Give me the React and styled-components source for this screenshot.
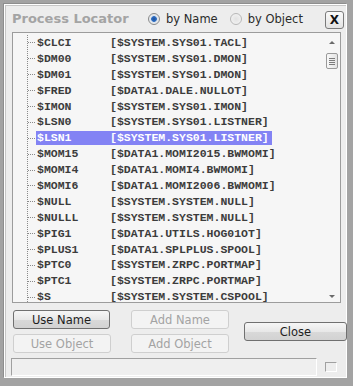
import React from "react";
import styled, { createGlobalStyle } from "styled-components";

const GlobalStyle = createGlobalStyle`
  html, body {
    margin: 0;
    padding: 0;
    background: #a3a3a3;
  }
  * {
    box-sizing: border-box;
  }
`;

const processes = [
  ["$CLCI", "[$SYSTEM.SYS01.TACL]"],
  ["$DM00", "[$SYSTEM.SYS01.DMON]"],
  ["$DM01", "[$SYSTEM.SYS01.DMON]"],
  ["$FRED", "[$DATA1.DALE.NULLOT]"],
  ["$IMON", "[$SYSTEM.SYS01.IMON]"],
  ["$LSN0", "[$SYSTEM.SYS01.LISTNER]"],
  ["$LSN1", "[$SYSTEM.SYS01.LISTNER]"],
  ["$MOM15", "[$DATA1.MOMI2015.BWMOMI]"],
  ["$MOMI4", "[$DATA1.MOMI4.BWMOMI]"],
  ["$MOMI6", "[$DATA1.MOMI2006.BWMOMI]"],
  ["$NULL", "[$SYSTEM.SYSTEM.NULL]"],
  ["$NULLL", "[$SYSTEM.SYSTEM.NULL]"],
  ["$PIG1", "[$DATA1.UTILS.HOG01OT]"],
  ["$PLUS1", "[$DATA1.SPLPLUS.SPOOL]"],
  ["$PTC0", "[$SYSTEM.ZRPC.PORTMAP]"],
  ["$PTC1", "[$SYSTEM.ZRPC.PORTMAP]"],
  ["$S", "[$SYSTEM.SYSTEM.CSPOOL]"],
];

const App = () => {
  return (
    <Frame>
      <GlobalStyle />
      <Panel>
        <Header>
          <Title>Process Locator</Title>
          <RadioGroup>
            <RadioOption>
              <Radio checked />
              by Name
            </RadioOption>
            <RadioOption>
              <Radio />
              by Object
            </RadioOption>
          </RadioGroup>
          <CloseX>X</CloseX>
        </Header>

        <ListBox>
          <Tree>
            {processes.map(([name, path]) => (
              <Row key={name}>
                <Connector />
                <Label selected={name === "$LSN1"}>
                  <Name>{name}</Name>
                  {path}
                </Label>
              </Row>
            ))}
          </Tree>
          <ScrollBar>
            <Arrow />
            <Thumb>
              <Grip />
              <Grip />
              <Grip />
              <Grip />
            </Thumb>
            <ArrowSpacer />
            <Arrow down />
          </ScrollBar>
        </ListBox>

        <Buttons>
          <Button>Use Name</Button>
          <Button disabled>Add Name</Button>
          <CloseButton>Close</CloseButton>
          <Button disabled>Use Object</Button>
          <Button disabled>Add Object</Button>
        </Buttons>

        <StatusRow>
          <StatusField />
          <StatusBox />
        </StatusRow>
      </Panel>
    </Frame>
  );
};

const Frame = styled.div`
  width: 353px;
  height: 386px;
  background: #a3a3a3;
  padding: 4px 6px 8px 4px;
`;

const Panel = styled.div`
  width: 100%;
  height: 100%;
  background: #ededed;
  border: 1px solid #ffffff;
  box-shadow: inset 1px 1px 0 #c6c6c6, -1px -1px 0 #8e8e8e;
  display: flex;
  flex-direction: column;
  font-family: "DejaVu Sans", Verdana, sans-serif;
`;

const Header = styled.div`
  height: 27px;
  display: flex;
  align-items: center;
  padding: 0 2px 0 7px;
`;

const Title = styled.div`
  font-size: 13px;
  font-weight: bold;
  color: #a4a4a4;
  width: 136px;
`;

const RadioGroup = styled.div`
  display: flex;
  gap: 12px;
  flex: 1;
`;

const RadioOption = styled.label`
  display: flex;
  align-items: center;
  gap: 6px;
  font-size: 11.5px;
  color: #2b2b2b;
`;

const Radio = styled.span`
  width: 12px;
  height: 12px;
  border-radius: 50%;
  border: 1px solid ${(p) => (p.checked ? "#8a8a8a" : "#b8b8b8")};
  background: ${(p) =>
    p.checked
      ? "radial-gradient(circle, #1d4f9a 0, #2f6fc4 2.5px, #dde3ea 3.2px, #f4f4f4 100%)"
      : "radial-gradient(circle, #e2e2e2 0, #f6f6f6 100%)"};
`;

const CloseX = styled.div`
  width: 19px;
  height: 18px;
  margin-top: 2px;
  border: 1px solid #7a7a7a;
  border-radius: 3px;
  background: linear-gradient(#fafafa, #e2e2e2);
  display: flex;
  align-items: center;
  justify-content: center;
  font-size: 12px;
  font-weight: bold;
  color: #111;
`;

const ListBox = styled.div`
  margin-left: 7px;
  width: 329px;
  height: 271px;
  border: 1px solid #9c9c9c;
  background: #f6f6f6;
  display: flex;
  overflow: hidden;
`;

const Tree = styled.div`
  flex: 1;
  margin: 2px 0 0 14px;
  border-left: 1px dotted #8a8a8a;
  font-family: "Liberation Mono", "Courier New", monospace;
  font-size: 11.5px;
  font-weight: bold;
  color: #3c3c3c;
`;

const Row = styled.div`
  height: 15.9px;
  display: flex;
  align-items: center;
`;

const Connector = styled.span`
  width: 7px;
  border-top: 1px dotted #8a8a8a;
  margin-right: 1px;
`;

const Label = styled.span`
  line-height: 14px;
  padding: 0 3px 0 1px;
  white-space: pre;
  background: ${(p) => (p.selected ? "#8383f4" : "transparent")};
  color: ${(p) => (p.selected ? "#ffffff" : "inherit")};
`;

const Name = styled.span`
  display: inline-block;
  width: 73px;
`;

const ScrollBar = styled.div`
  width: 17px;
  display: flex;
  flex-direction: column;
  align-items: center;
  padding: 8px 0 4px;
`;

const Arrow = styled.span`
  width: 0;
  height: 0;
  border-left: 3px solid transparent;
  border-right: 3px solid transparent;
  ${(p) =>
    p.down
      ? "border-top: 3px solid #6a6a6a;"
      : "border-bottom: 3px solid #6a6a6a;"}
`;

const Thumb = styled.div`
  margin-top: 9px;
  width: 12px;
  height: 16px;
  border: 1px solid #9a9a9a;
  border-radius: 2px;
  background: linear-gradient(90deg, #f8f8f8, #e4e4e4);
  display: flex;
  flex-direction: column;
  align-items: center;
  justify-content: center;
  gap: 1px;
`;

const Grip = styled.span`
  width: 6px;
  height: 1px;
  background: #7c7c7c;
`;

const ArrowSpacer = styled.div`
  flex: 1;
`;

const Buttons = styled.div`
  display: grid;
  grid-template-columns: 98px 98px 98px;
  grid-template-rows: 19px 19px;
  column-gap: 20px;
  row-gap: 5px;
  margin: 7px 0 0 8px;
  & > :nth-child(1) {
    margin-right: 1px;
  }
  & > :nth-child(3) {
    grid-column: 3;
    grid-row: 1 / span 2;
    align-self: center;
    margin-left: -5px;
  }
`;

const Button = styled.div`
  height: 19px;
  border-radius: 3px;
  border: 1px solid ${(p) => (p.disabled ? "#cfcfcf" : "#707070")};
  background: ${(p) =>
    p.disabled ? "#f3f3f3" : "linear-gradient(#f6f6f6 0%, #e8e8e8 50%, #d9d9d9 51%, #d2d2d2 100%)"};
  color: ${(p) => (p.disabled ? "#a3a3a3" : "#1e1e1e")};
  font-size: 11.5px;
  display: flex;
  align-items: center;
  justify-content: center;
`;

const CloseButton = styled(Button)``;

const StatusRow = styled.div`
  display: flex;
  align-items: center;
  margin: 5px 0 0 6px;
  gap: 8px;
`;

const StatusField = styled.div`
  width: 306px;
  height: 18px;
  border: 1px solid;
  border-color: #a0a0a0 #ffffff #ffffff #a0a0a0;
  background: #efefef;
`;

const StatusBox = styled.div`
  width: 12px;
  height: 10px;
  border: 1px solid;
  border-color: #a0a0a0 #ffffff #ffffff #a0a0a0;
`;

export default App;
